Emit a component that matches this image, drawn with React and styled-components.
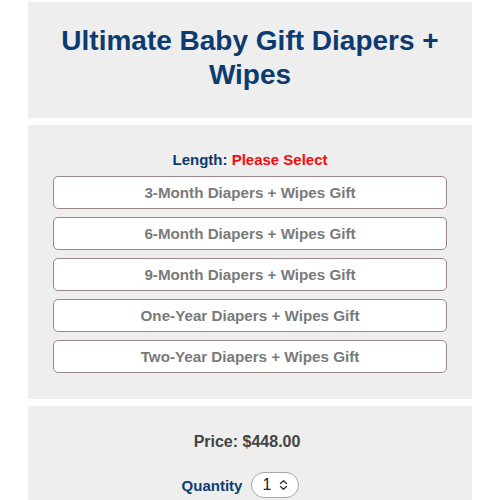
import React, { useState } from "react";
import styled, { createGlobalStyle } from "styled-components";

const options = [
  "3-Month Diapers + Wipes Gift",
  "6-Month Diapers + Wipes Gift",
  "9-Month Diapers + Wipes Gift",
  "One-Year Diapers + Wipes Gift",
  "Two-Year Diapers + Wipes Gift",
];

const App = () => {
  const [selected, setSelected] = useState(null);

  return (
    <>
      <GlobalStyle />
      <Page>
        <Panel $pad="22px 20px 26px">
          <Title>Ultimate Baby Gift Diapers + Wipes</Title>
        </Panel>
        <Panel $pad="25px 25px 26px">
          <LengthLabel>
            Length: <Required>{selected === null ? "Please Select" : options[selected]}</Required>
          </LengthLabel>
          <OptionList>
            {options.map((opt, i) => (
              <OptionButton
                key={opt}
                $active={selected === i}
                onClick={() => setSelected(i)}
              >
                {opt}
              </OptionButton>
            ))}
          </OptionList>
        </Panel>
        <Panel $pad="26px 25px 30px">
          <Price>Price: $448.00</Price>
          <QuantityRow>
            <QuantityLabel>Quantity</QuantityLabel>
            <QuantitySelect>
              <span>1</span>
              <svg width="11" height="12" viewBox="0 0 11 12" fill="none">
                <path
                  d="M2.5 4.5 L5.5 1.8 L8.5 4.5 M2.5 7.5 L5.5 10.2 L8.5 7.5"
                  stroke="#333"
                  strokeWidth="1.4"
                  strokeLinecap="round"
                  strokeLinejoin="round"
                />
              </svg>
            </QuantitySelect>
          </QuantityRow>
        </Panel>
      </Page>
    </>
  );
};

export default App;

const GlobalStyle = createGlobalStyle`
  body {
    margin: 0;
    background: #ffffff;
    font-family: "Liberation Sans", Arial, sans-serif;
  }
`;

const Page = styled.div`
  display: flex;
  flex-direction: column;
  gap: 7px;
  width: 444px;
  margin: 2px auto 0;
`;

const Panel = styled.section`
  background: #eeeeee;
  padding: ${(p) => p.$pad};
  display: flex;
  flex-direction: column;
  align-items: center;
`;

const Title = styled.h1`
  margin: 0;
  font-size: 28px;
  line-height: 34px;
  font-weight: 700;
  color: #0d3b70;
  text-align: center;
  max-width: 400px;
`;

const LengthLabel = styled.div`
  font-size: 15px;
  line-height: 20px;
  font-weight: 700;
  color: #0d3b70;
  margin-bottom: 6px;
`;

const Required = styled.span`
  color: #f20d0d;
`;

const OptionList = styled.div`
  display: flex;
  flex-direction: column;
  gap: 8px;
  width: 100%;
`;

const OptionButton = styled.button`
  height: 33px;
  width: 100%;
  background: #ffffff;
  border: 1.5px solid ${(p) => (p.$active ? "#0d3b70" : "#9c8686")};
  border-radius: 5px;
  font-family: "Liberation Sans", Arial, sans-serif;
  font-size: 15.2px;
  font-weight: 700;
  color: #7a7a7a;
  cursor: pointer;
  padding: 0;
`;

const Price = styled.div`
  font-size: 16px;
  line-height: 20px;
  font-weight: 700;
  color: #444444;
  margin-bottom: 20px;
  margin-right: 6px;
`;

const QuantityRow = styled.div`
  display: flex;
  align-items: center;
  gap: 9px;
  margin-right: 19px;
`;

const QuantityLabel = styled.span`
  font-size: 15px;
  font-weight: 700;
  color: #0d3b70;
`;

const QuantitySelect = styled.div`
  display: flex;
  align-items: center;
  justify-content: space-between;
  width: 48px;
  height: 26px;
  box-sizing: border-box;
  padding: 0 9px 0 10px;
  background: #ffffff;
  border: 1px solid #a8a8a8;
  border-radius: 13px;
  font-size: 16px;
  color: #222;
`;
